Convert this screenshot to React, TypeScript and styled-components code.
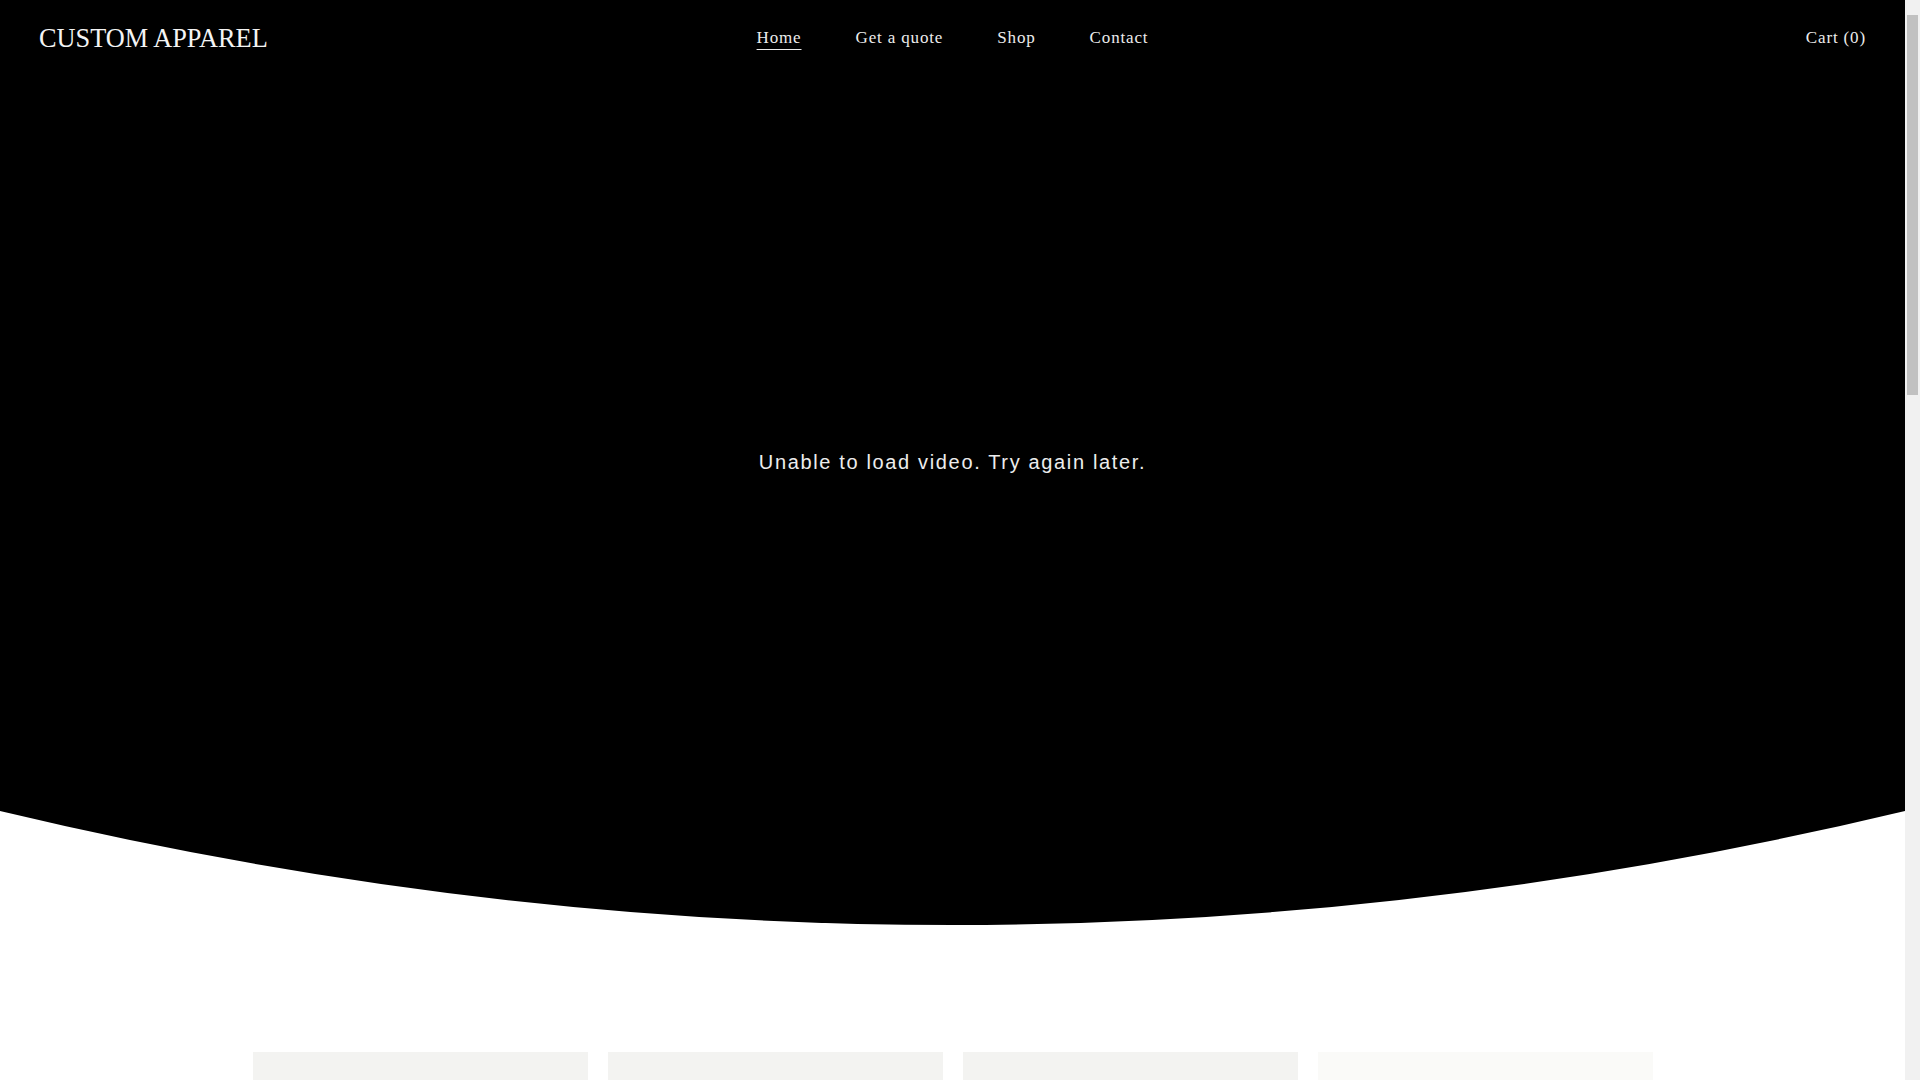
import React from "react";
import styled, { createGlobalStyle } from "styled-components";

const GlobalStyle = createGlobalStyle`
    html, body {
        margin: 0;
        padding: 0;
        background: #ffffff;
    }
    * {
        box-sizing: border-box;
    }
`

const Page = styled.div`
    display: grid;
    grid-template-columns: 1fr 15px;
    align-items: start;
`

const Main = styled.main`
    min-width: 0;
`

// the browser's scrollbar, as it shows in the capture
const ScrollTrack = styled.div`
    position: sticky;
    top: 0;
    height: 100vh;
    background-color: #f1f1f1;
    padding: 15px 2px;
`

const ScrollThumb = styled.div`
    height: 380px;
    background-color: #c1c1c1;
`

const Hero = styled.section`
    display: grid;
    height: 925px;
    background-color: #000;
    /* curved bottom edge, edges at 811px, centre dips to 925px */
    clip-path: path("M0 0 H1905 V811 Q952.5 1039 0 811 Z");
`

const Header = styled.header`
    grid-area: 1 / 1;
    align-self: start;
    display: grid;
    grid-template-columns: 1fr auto 1fr;
    align-items: center;
    height: 74px;
    padding: 2px 39px 0;
    position: relative;
    z-index: 1;
`

const Logo = styled.a`
    justify-self: start;
    font-family: "Liberation Serif", "Times New Roman", serif;
    font-size: 26.3px;
    color: #f4f4f4;
    text-decoration: none;
    line-height: 1;
    padding-top: 2px;
`

const Nav = styled.nav`
    display: flex;
    gap: 54px;
`

const NavLink = styled.a<{ $active?: boolean }>`
    font-family: "Liberation Serif", "Times New Roman", serif;
    font-size: 17px;
    letter-spacing: 0.05em;
    color: #ececec;
    text-decoration: ${p => p.$active ? "underline" : "none"};
    text-decoration-thickness: 1px;
    text-underline-offset: 6px;
    cursor: pointer;
`

const Cart = styled(NavLink)`
    justify-self: end;
`

const VideoArea = styled.div`
    grid-area: 1 / 1;
    display: flex;
    align-items: center;
    justify-content: center;
`

const VideoMessage = styled.p`
    margin: 0;
    font-family: "Liberation Sans", Arial, sans-serif;
    font-size: 20px;
    letter-spacing: 1.65px;
    color: #ededed;
`

const Products = styled.section`
    display: flex;
    justify-content: center;
    gap: 20px;
    padding: 127px 0 120px;
`

const Card = styled.div<{ $tone: string }>`
    width: 335px;
    aspect-ratio: 1 / 1.25;
    background-color: ${p => p.$tone};
`

const links = ["Home", "Get a quote", "Shop", "Contact"]
const cardTones = ["#f3f3f1", "#f3f3f1", "#f3f3f1", "#fafaf8"]

const App = () => {
    return (
        <>
            <GlobalStyle />
            <Page>
                <Main>
                    <Hero>
                        <VideoArea>
                            <VideoMessage>Unable to load video. Try again later.</VideoMessage>
                        </VideoArea>
                        <Header>
                            <Logo>CUSTOM APPAREL</Logo>
                            <Nav>
                                {links.map(l => <NavLink key={l} $active={l === "Home"}>{l}</NavLink>)}
                            </Nav>
                            <Cart>Cart (0)</Cart>
                        </Header>
                    </Hero>

                    <Products>
                        {cardTones.map((tone, i) => <Card key={i} $tone={tone} />)}
                    </Products>
                </Main>
                <ScrollTrack>
                    <ScrollThumb />
                </ScrollTrack>
            </Page>
        </>
    )
}

export default App
